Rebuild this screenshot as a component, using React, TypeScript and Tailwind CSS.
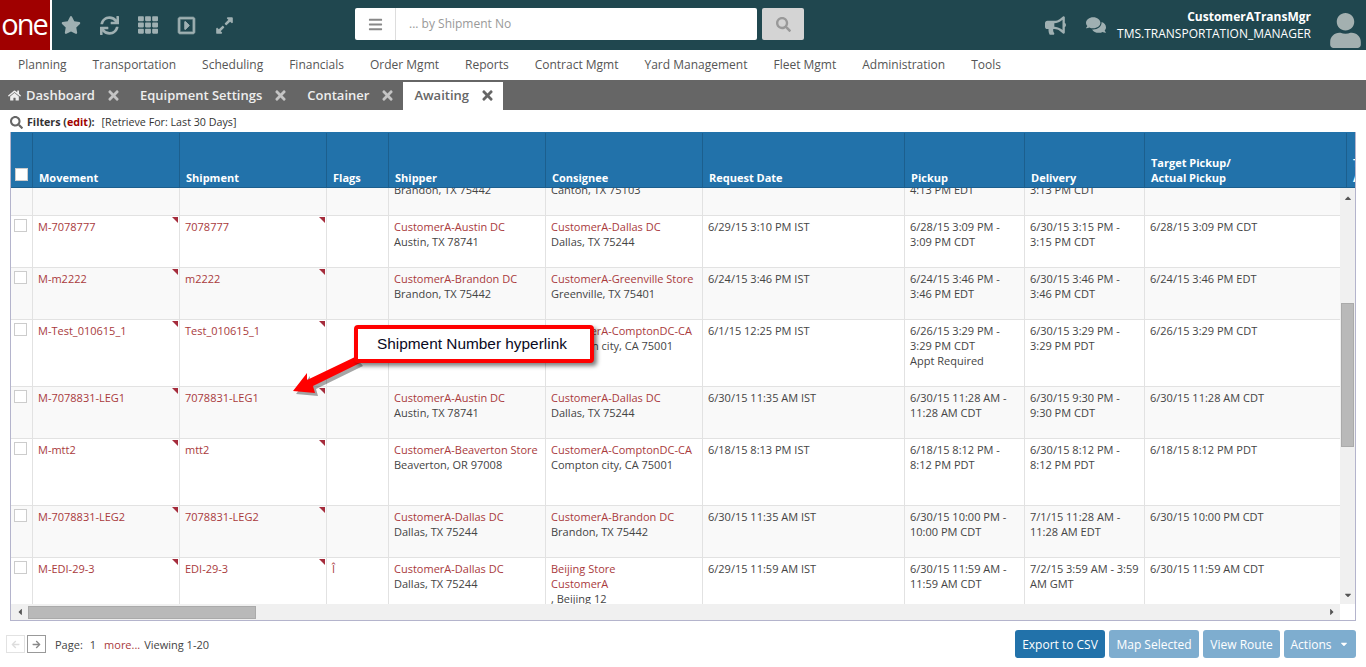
import { FaBars, FaBullhorn, FaComments, FaExpandAlt, FaHome, FaRegCaretSquareRight, FaSearch, FaStar, FaSync, FaTh, FaTimes, FaUser, FaCaretDown, FaCaretUp, FaCaretLeft, FaCaretRight, FaArrowLeft, FaArrowRight } from 'react-icons/fa';

const navItems = ['Planning', 'Transportation', 'Scheduling', 'Financials', 'Order Mgmt', 'Reports', 'Contract Mgmt', 'Yard Management', 'Fleet Mgmt', 'Administration', 'Tools'];

type Row = {
  h: string;
  movement: string;
  shipment: string;
  flag?: string;
  shipper: string[];
  consignee: string[];
  request: string;
  pickup: string[];
  delivery: string[];
  target: string;
};

const rows: Row[] = [
  { h: 'h-[52px]', movement: '', shipment: '', shipper: ['CustomerA-Brandon DC', 'Brandon, TX 75442'], consignee: ['CustomerA-Canton Store', 'Canton, TX 75103'], request: '', pickup: ['6/28/15 4:13 PM -', '4:13 PM EDT'], delivery: ['6/30/15 3:13 PM -', '3:13 PM CDT'], target: '' },
  { h: 'h-[52px]', movement: 'M-7078777', shipment: '7078777', shipper: ['CustomerA-Austin DC', 'Austin, TX 78741'], consignee: ['CustomerA-Dallas DC', 'Dallas, TX 75244'], request: '6/29/15 3:10 PM IST', pickup: ['6/28/15 3:09 PM -', '3:09 PM CDT'], delivery: ['6/30/15 3:15 PM -', '3:15 PM CDT'], target: '6/28/15 3:09 PM CDT' },
  { h: 'h-[52px]', movement: 'M-m2222', shipment: 'm2222', shipper: ['CustomerA-Brandon DC', 'Brandon, TX 75442'], consignee: ['CustomerA-Greenville Store', 'Greenville, TX 75401'], request: '6/24/15 3:46 PM IST', pickup: ['6/24/15 3:46 PM -', '3:46 PM EDT'], delivery: ['6/30/15 3:46 PM -', '3:46 PM CDT'], target: '6/24/15 3:46 PM EDT' },
  { h: 'h-[67px]', movement: 'M-Test_010615_1', shipment: 'Test_010615_1', shipper: ['CustomerA-Austin DC', 'Austin, TX 78741'], consignee: ['CustomerA-ComptonDC-CA', 'Compton city, CA 75001'], request: '6/1/15 12:25 PM IST', pickup: ['6/26/15 3:29 PM -', '3:29 PM CDT', 'Appt Required'], delivery: ['6/30/15 3:29 PM -', '3:29 PM PDT'], target: '6/26/15 3:29 PM CDT' },
  { h: 'h-[52px]', movement: 'M-7078831-LEG1', shipment: '7078831-LEG1', shipper: ['CustomerA-Austin DC', 'Austin, TX 78741'], consignee: ['CustomerA-Dallas DC', 'Dallas, TX 75244'], request: '6/30/15 11:35 AM IST', pickup: ['6/30/15 11:28 AM -', '11:28 AM CDT'], delivery: ['6/30/15 9:30 PM -', '9:30 PM CDT'], target: '6/30/15 11:28 AM CDT' },
  { h: 'h-[67px]', movement: 'M-mtt2', shipment: 'mtt2', shipper: ['CustomerA-Beaverton Store', 'Beaverton, OR 97008'], consignee: ['CustomerA-ComptonDC-CA', 'Compton city, CA 75001'], request: '6/18/15 8:13 PM IST', pickup: ['6/18/15 8:12 PM -', '8:12 PM PDT'], delivery: ['6/30/15 8:12 PM -', '8:12 PM PDT'], target: '6/18/15 8:12 PM PDT' },
  { h: 'h-[52px]', movement: 'M-7078831-LEG2', shipment: '7078831-LEG2', shipper: ['CustomerA-Dallas DC', 'Dallas, TX 75244'], consignee: ['CustomerA-Brandon DC', 'Brandon, TX 75442'], request: '6/30/15 11:35 AM IST', pickup: ['6/30/15 10:00 PM -', '10:00 PM CDT'], delivery: ['7/1/15 11:28 AM -', '11:28 AM EDT'], target: '6/30/15 10:00 PM CDT' },
  { h: 'h-[67px]', movement: 'M-EDI-29-3', shipment: 'EDI-29-3', flag: 'Î', shipper: ['CustomerA-Dallas DC', 'Dallas, TX 75244'], consignee: ['Beijing Store', 'CustomerA', ', Beijing 12'], request: '6/29/15 11:59 AM IST', pickup: ['6/30/15 11:59 AM -', '11:59 AM CDT'], delivery: ['7/2/15 3:59 AM - 3:59', 'AM GMT'], target: '6/30/15 11:59 AM CDT' },
];

const Marker = () => <span className="absolute top-px right-px w-0 h-0 border-t-[6px] border-l-[6px] border-t-[#a52c3c] border-l-transparent" />;

// first line of shipper/consignee is a link, the rest is the address
const Stacked = ({ lines, linkLines }: { lines: string[]; linkLines: number }) => (
  <>
    {lines.map((line, i) => (
      <div key={i} className={i < linkLines ? 'text-[#a93a3c]' : ''}>{line}</div>
    ))}
  </>
);

const HeadCell = ({ w, children }: { w: string; children?: React.ReactNode }) => (
  <div className={`${w} shrink-0 border-r border-[#1c5f8e] mt-px px-[6px] pb-[2px] flex items-end font-bold`}>
    <div>{children}</div>
  </div>
);

const Cell = ({ w, children, className = '' }: { w: string; children?: React.ReactNode; className?: string }) => (
  <div className={`${w} shrink-0 relative border-r border-[#e2e2e2] px-[5px] pt-[3px] ${className}`}>{children}</div>
);

const ActionButton = ({ w, children, dark }: { w: string; children: React.ReactNode; dark?: boolean }) => (
  <button className={`${w} h-[28px] rounded-[3px] text-white text-[12px] font-medium flex items-center justify-center gap-2 ${dark ? 'bg-[#2272aa]' : 'bg-[#7eadcf]'}`}>{children}</button>
);

export default function App() {
  return (
    <div className="relative h-[667px] w-[1366px] overflow-hidden bg-white font-['Open_Sans',sans-serif] text-[11px] leading-[15px] text-[#444]">
      {/* Top bar */}
      <div className="h-[50px] bg-[#20474f] flex items-center">
        <div className="w-[52px] h-[50px] border-r-2 border-white bg-[#a00000] flex items-center justify-center">
          <span className="text-white text-[29px] leading-[34px] tracking-[-2px] -mt-[3px] -ml-[2px]">one</span>
        </div>
        <div className="flex items-center text-[#9fb0b2] gap-[19px] ml-[9px] w-[294px]">
          <FaStar size={20} />
          <FaSync size={19} />
          <FaTh size={20} />
          <FaRegCaretSquareRight size={19} stroke="currentColor" strokeWidth={24} />
          <FaExpandAlt size={19} />
        </div>
        <div className="flex h-[32px] w-[402px] -mt-[2px] bg-white rounded-[2px]">
          <div className="w-[41px] border-r border-[#ddd] flex items-center justify-center text-[#888]"><FaBars size={15} /></div>
          <div className="pl-[13px] pb-[2px] flex items-center text-[12px] text-[#999]">... by Shipment No</div>
        </div>
        <div className="w-[42px] h-[32px] -mt-[2px] ml-[5px] bg-[#d4d4d4] rounded-[2px] flex items-center justify-center text-[#999]"><FaSearch size={15} /></div>
        <div className="flex items-center text-[#9fb0b2] gap-[20px] ml-[241px]">
          <FaBullhorn size={21} />
          <FaComments size={20} />
        </div>
        <div className="ml-auto mr-[55px] text-right text-white text-[12px] leading-[17px]">
          <div className="font-bold">CustomerATransMgr</div>
          <div>TMS.TRANSPORTATION_MANAGER</div>
        </div>
        <div className="absolute left-[1328px] top-[13px] text-[#a3b0b0]"><FaUser size={35} /></div>
      </div>

      {/* Module menu */}
      <div className="h-[30px] flex items-center pl-[18px] gap-[26px] pb-[2px] text-[12px] text-[#555]">
        {navItems.map((item) => <span key={item}>{item}</span>)}
      </div>

      {/* Open tabs */}
      <div className="h-[30px] bg-[#666] flex items-end text-[13px] font-semibold text-[#eee]">
        <div className="h-[28px] flex items-center pl-[8px] pb-[2px]">
          <FaHome size={13} />
          <span className="ml-[5px]">Dashboard</span>
          <FaTimes size={15} className="ml-[11px] text-[#c4c4c4]" />
          <span className="ml-[19px]">Equipment Settings</span>
          <FaTimes size={15} className="ml-[11px] text-[#c4c4c4]" />
          <span className="ml-[19px]">Container</span>
          <FaTimes size={15} className="ml-[11px] text-[#c4c4c4]" />
        </div>
        <div className="h-[28px] w-[100px] ml-[8px] bg-white text-[#666] flex items-center pl-[11px] pb-[2px]">
          <span>Awaiting</span>
          <FaTimes size={15} className="ml-[11px]" />
        </div>
      </div>

      {/* Filters */}
      <div className="h-[22px] flex items-center pl-[10px] pt-[2px] text-[10.7px] text-[#333]">
        <FaSearch size={13} className="text-[#666]" />
        <span className="ml-[4px] font-bold">Filters (<span className="text-[#a00000]">edit</span>):</span>
        <span className="ml-[7px]">[Retrieve For: Last 30 Days]</span>
      </div>

      {/* Grid */}
      <div className="mx-[10px] h-[489px] border-l border-r border-b border-[#b4b4cc] flex flex-col">
        <div className="h-[56px] shrink-0 bg-[#2272aa] border-b border-[#1c5f8e] flex text-white overflow-hidden">
          <div className="w-[22px] shrink-0 border-r border-[#1c5f8e] mt-px flex items-end pb-[6px] pl-[4px]">
            <span className="w-[13px] h-[13px] bg-white border border-[#ccc]" />
          </div>
          <HeadCell w="w-[147px]">Movement</HeadCell>
          <HeadCell w="w-[147px]">Shipment</HeadCell>
          <HeadCell w="w-[62px]">Flags</HeadCell>
          <HeadCell w="w-[157px]">Shipper</HeadCell>
          <HeadCell w="w-[157px]">Consignee</HeadCell>
          <HeadCell w="w-[202px]">Request Date</HeadCell>
          <HeadCell w="w-[120px]">Pickup</HeadCell>
          <HeadCell w="w-[120px]">Delivery</HeadCell>
          <HeadCell w="w-[202px]">Target Pickup/<br />Actual Pickup</HeadCell>
          <HeadCell w="w-[60px]">Target<br />Actual</HeadCell>
        </div>
        <div className="flex flex-1 min-h-0">
          <div className="flex-1 min-w-0 overflow-hidden">
            <div className="-mt-[24px]">
              {rows.map((row, i) => (
                <div key={i} className={`${row.h} flex border-b border-[#e2e2e2] ${i % 2 === 0 ? 'bg-[#f9f9f9]' : 'bg-white'}`}>
                  <Cell w="w-[22px]" className="!px-0 !pt-0">
                    {i > 0 && <span className="block w-[13px] h-[13px] ml-[3px] mt-[3px] bg-white border border-[#ccc]" />}
                  </Cell>
                  <Cell w="w-[147px]" className="text-[#a93a3c]">{row.movement}{row.movement && <Marker />}</Cell>
                  <Cell w="w-[147px]" className="text-[#a93a3c]">{row.shipment}{row.shipment && <Marker />}</Cell>
                  <Cell w="w-[62px]" className="text-[#a93a3c]">{row.flag}</Cell>
                  <Cell w="w-[157px]"><Stacked lines={row.shipper} linkLines={1} /></Cell>
                  <Cell w="w-[157px]"><Stacked lines={row.consignee} linkLines={i === 7 ? 2 : 1} /></Cell>
                  <Cell w="w-[202px]">{row.request}</Cell>
                  <Cell w="w-[120px]"><Stacked lines={row.pickup} linkLines={0} /></Cell>
                  <Cell w="w-[120px]"><Stacked lines={row.delivery} linkLines={0} /></Cell>
                  <Cell w="w-[196px]" className="border-r-0">{row.target}</Cell>
                </div>
              ))}
            </div>
          </div>
          {/* Vertical scrollbar */}
          <div className="w-[15px] shrink-0 bg-[#f0f0f0] flex flex-col items-center text-[#555]">
            <div className="h-[17px] flex items-center pt-[2px]"><FaCaretUp size={10} /></div>
            <div className="w-[13px] h-[144px] mt-[98px] bg-[#b9b9b9] border border-[#aaa]" />
            <div className="mt-auto h-[17px] flex items-center pb-[2px]"><FaCaretDown size={10} /></div>
          </div>
        </div>
        {/* Horizontal scrollbar */}
        <div className="h-[16px] shrink-0 flex">
          <div className="flex-1 bg-[#f0f0f0] flex items-center text-[#555]">
            <div className="w-[17px] flex justify-center"><FaCaretLeft size={10} /></div>
            <div className="w-[228px] h-[13px] bg-[#b9b9b9] border border-[#aaa]" />
            <div className="ml-auto w-[17px] flex justify-center"><FaCaretRight size={10} /></div>
          </div>
          <div className="w-[15px] bg-white" />
        </div>
      </div>

      {/* Pager and actions */}
      <div className="flex items-center mt-[9px] h-[28px]">
        <div className="ml-[6px] flex gap-[2px]">
          <span className="w-[19px] h-[18px] border border-[#e2e2e2] flex items-center justify-center text-[#ddd]"><FaArrowLeft size={9} /></span>
          <span className="w-[19px] h-[18px] border border-[#999] flex items-center justify-center text-[#888]"><FaArrowRight size={9} /></span>
        </div>
        <span className="ml-[9px]">Page:</span>
        <span className="ml-[7px]">1</span>
        <span className="ml-[8px] text-[#a93a3c]">more...</span>
        <span className="ml-[4px]">Viewing 1-20</span>
        <div className="ml-auto mr-[10px] flex gap-[4px]">
          <ActionButton w="w-[90px]" dark>Export to CSV</ActionButton>
          <ActionButton w="w-[90px]">Map Selected</ActionButton>
          <ActionButton w="w-[77px]">View Route</ActionButton>
          <ActionButton w="w-[72px]">Actions <FaCaretDown size={10} /></ActionButton>
        </div>
      </div>

      {/* Screenshot annotation */}
      <svg className="absolute left-[285px] top-[350px]" width="80" height="50" viewBox="0 0 80 50">
        <polygon points="8,41 22,23 22,30 70,7 75,13 28,36 30,43" fill="#000" opacity="0.35" transform="translate(3 3)" />
        <polygon points="8,41 22,23 22,30 70,7 75,13 28,36 30,43" fill="#ff0000" />
      </svg>
      <div className="absolute left-[354px] top-[325px] w-[240px] h-[38px] bg-white border-[4px] border-[#ff0000] rounded-[4px] shadow-[3px_3px_4px_rgba(0,0,0,0.5)] font-['Liberation_Sans',sans-serif] text-[15.4px] leading-[29px] text-[#0a0a1e] pl-[19px]">
        Shipment Number hyperlink
      </div>
    </div>
  );
}
